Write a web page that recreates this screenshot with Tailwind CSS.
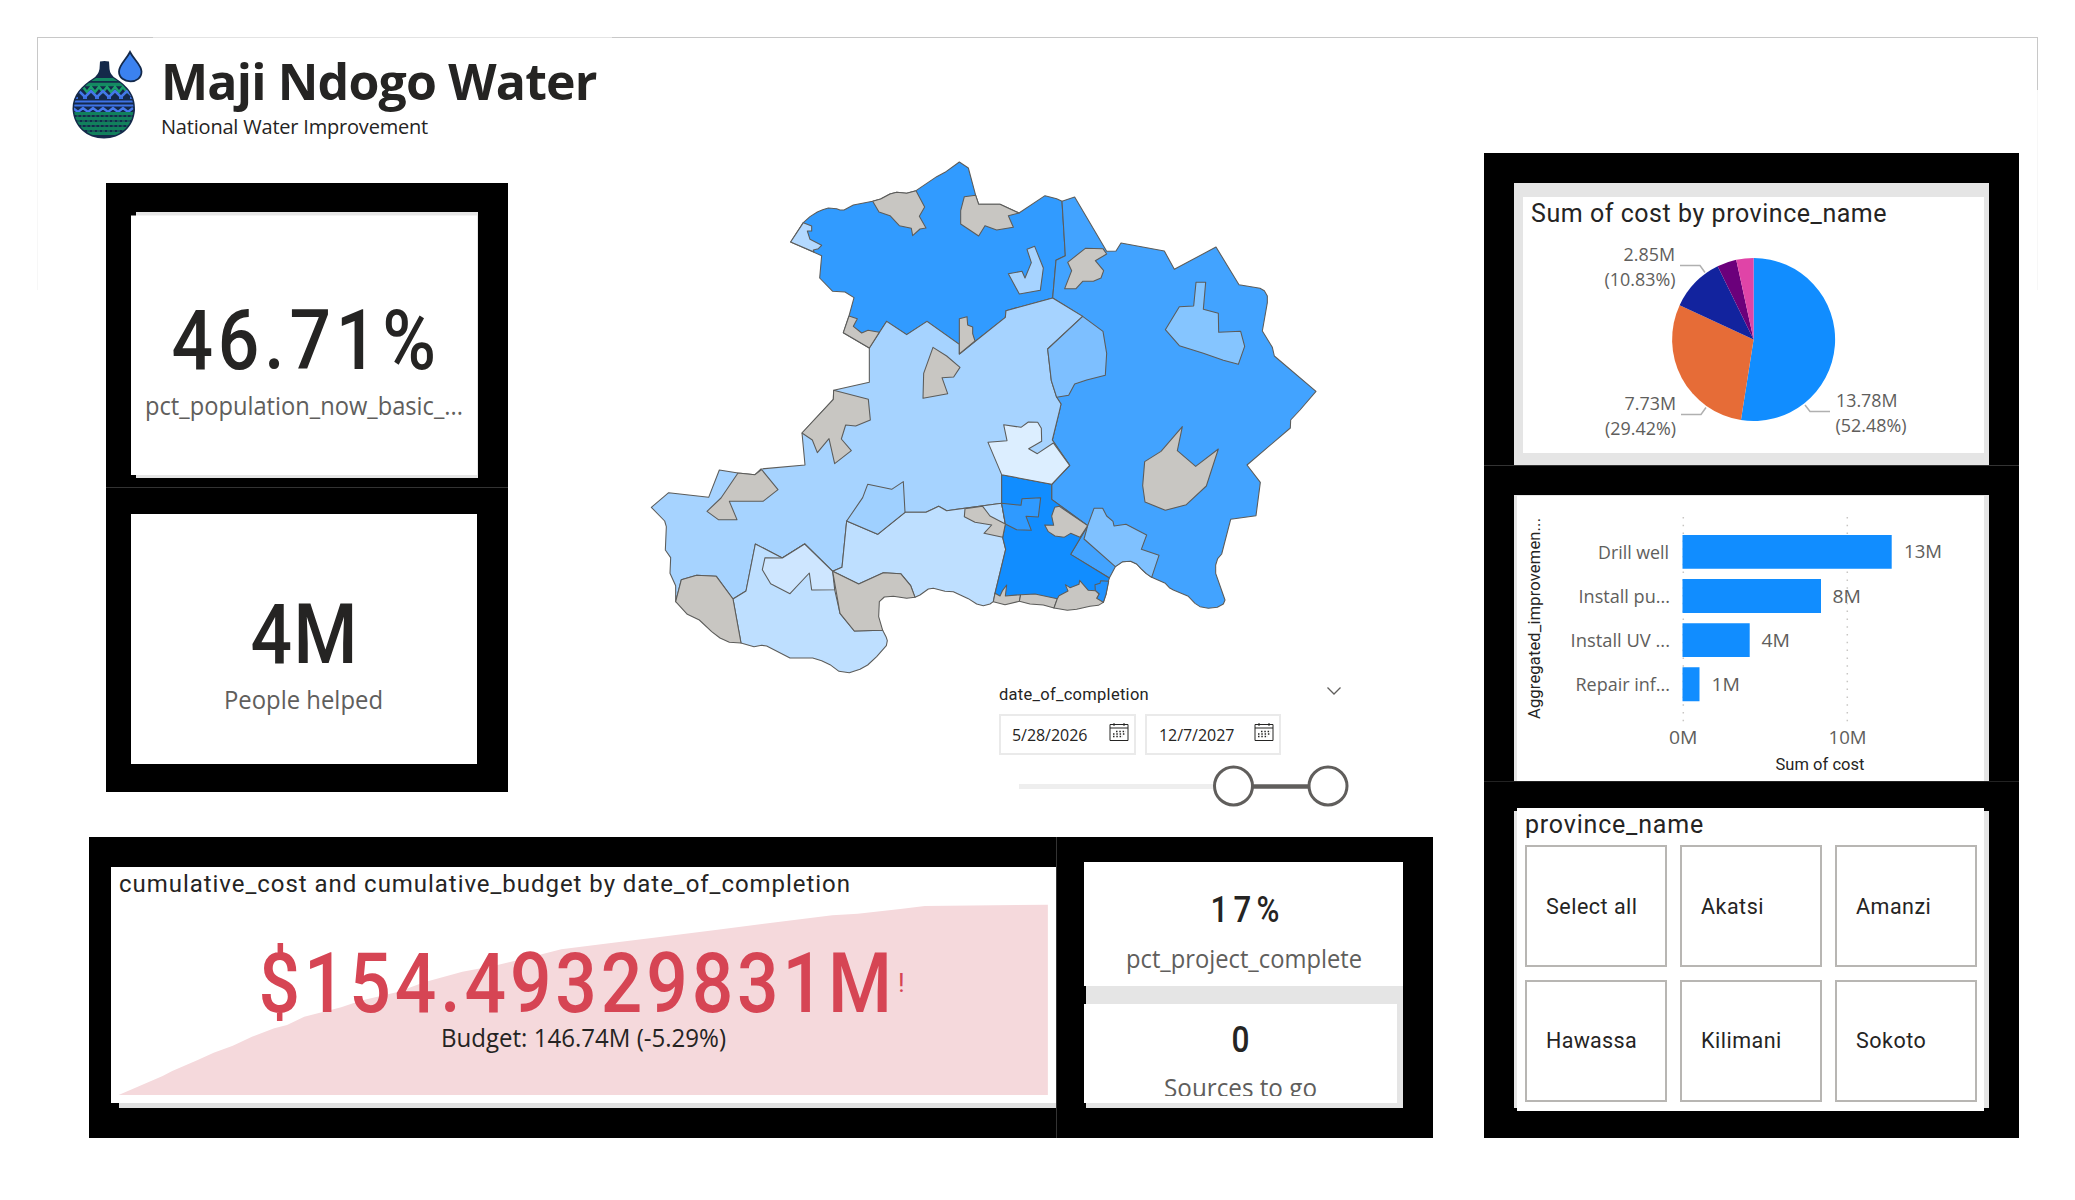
<!DOCTYPE html>
<html lang="en">
<head>
<meta charset="utf-8">
<title>Maji Ndogo Water</title>
<script src="https://cdn.jsdelivr.net/npm/@tailwindcss/browser@4"></script>
</head>
<body class="bg-white">
<div class="relative flex w-[2075px] h-[1200px] overflow-hidden font-['Open_Sans',sans-serif] text-[#252423]">
  <!-- canvas edge -->
  <div class="absolute left-[37px] top-[37px] w-[2001px] h-[53px] border border-b-0 border-[#c8c8c8]"></div>
  <div class="absolute left-[153px] top-[37px] w-[459px] h-px bg-[#e4e4e4]"></div>
  <div class="absolute left-[37px] top-[90px] w-[2001px] h-[200px] border-x border-[#f7f7f7]"></div>

  <div class="flex flex-col w-[1484px]">
    <header class="flex h-[150px] pl-[71px] pt-[49px]">
      <svg class="w-[74px] h-[92px] shrink-0" viewBox="71 49 74 92">
        <path d="M100 61.500Q104.500 60.500 109 61.500L109.500 69Q110 75 116 78.500C127 86 135.500 94 135 110C134 127 121 138.500 104 138.500C87 138.500 73.500 127 72.500 109C72.500 94 82 86 93 78.500Q98.500 75 99.500 69Z" fill="#14294a"/>
        <clipPath id="gourd"><path d="M96 78H113C126 86 133.500 95 133.500 109C133 126 120 137 104 137C88 137 74.500 126 74 109C74 95 83 86 96 78Z"/></clipPath>
        <g clip-path="url(#gourd)" fill="none">
          <path d="M72 79.500H136" stroke="#148a62" stroke-width="3"/>
          <path d="M72 84.500H136" stroke="#148a62" stroke-width="3.500"/>
          <path d="M79 90l4-3 4 5 4-5 4 5 4-5 4 5 4-5 4 5 4-5 4 5 4-5 4 5 4-5" stroke="#1aa06b" stroke-width="2.500"/>
          <path d="M73 97l6-6 6 6 6-6 6 6 6-6 6 6 6-6 6 6 6-6 6 6 6-6" stroke="#4377e8" stroke-width="2.500"/>
          <path d="M75 98h3M83 98h4M95 98h4M107 98h4M119 98h4M130 98h3" stroke="#3a6fe0" stroke-width="2"/>
          <path d="M72 101.500H136M72 105.500H136" stroke="#3e73e6" stroke-width="2.200"/>
          <path d="M73 108l5 4 5-4 5 4 5-4 5 4 5-4 5 4 5-4 5 4 5-4 5 4 5-4" stroke="#4679ec" stroke-width="2.500"/>
          <path d="M72 113.500H136M72 118.500H136M72 123.500H136M72 128.500H136M72 133.500H136" stroke="#11805c" stroke-width="3"/>
          <path d="M72 116H136M72 126H136" stroke="#1b8a68" stroke-width="1.200" stroke-dasharray="2 2.500"/>
          <path d="M72 121H136M72 131H136" stroke="#1b8a68" stroke-width="1.200" stroke-dasharray="3 2"/>
        </g>
        <path d="M130 52C134 60 141.500 65 141.500 71.500C141.500 78 136.500 81.300 130.500 81.300C124.500 81.300 119 78 119 71.500C119 65 126 60 130 52Z" fill="#3b82f0" stroke="#14294a" stroke-width="1.800"/>
      </svg>
      <div class="flex flex-col pl-[16px] pt-[7px]">
        <h1 class="text-[50px] leading-none font-bold tracking-[-0.820px] whitespace-nowrap">Maji Ndogo Water</h1>
        <p class="mt-[11px] text-[20px] leading-none tracking-[-0.200px] whitespace-nowrap">National Water Improvement</p>
      </div>
    </header>

    <div class="flex h-[687px]">
      <!-- KPI column -->
      <section class="ml-[106px] mt-[33px] w-[402px] h-[609px] shrink-0 bg-black pl-[25px] flex flex-col">
        <svg class="mt-[29px] w-[347px] h-[266px] shrink-0" viewBox="131 212 347 266">
          <path d="M136 212h342v266h-342z" fill="#e6e6e6"/>
          <path d="M131 215.500h346v259.500h-346z" fill="#fff"/>
          <text transform="translate(171.500 369) scale(.87 1)" x="0" y="0" textLength="304" font-family="Roboto" font-weight="500" font-size="84" fill="#252423">46.71%</text>
          <text x="145" y="415" textLength="318" lengthAdjust="spacingAndGlyphs" font-family="Open Sans" font-size="25" fill="#605e5c">pct_population_now_basic_...</text>
        </svg>
        <div class="mt-[9px] -ml-[25px] w-[402px] h-px shrink-0 bg-[#333]"></div>
        <svg class="mt-[26px] w-[346px] h-[250px] shrink-0 bg-white" viewBox="131 514 346 250">
          <text transform="translate(250.500 662.500) scale(.87 1)" x="0" y="0" textLength="123" font-family="Roboto" font-weight="500" font-size="84" fill="#252423">4M</text>
          <text x="224" y="709" textLength="159" lengthAdjust="spacingAndGlyphs" font-family="Open Sans" font-size="25" fill="#605e5c">People helped</text>
        </svg>
      </section>

      <section class="ml-[132px] w-[760px] flex flex-col">
        <!-- province map -->
        <svg class="w-[700px] h-[530px] shrink-0" viewBox="0 0 2100 1590" stroke="#5c5c5a" stroke-width="3.200" stroke-linejoin="round">
          <polygon fill="#319bff" points="490,218 510,200 532,186 548,179 565,174 590,176 600,180 612,180 640,165 698,154 722,147 750,132 770,127 800,130 828,122 890,80 915,67 958,36 985,54 1007,136 1016,163 1080,163 1137,189 1215,137 1250,146 1266,154 1276,317 1248,331 1238,444 1098,482 1096,502 958,612 958,583 861,514 800,554 740,514 688,594 610,548 627,498 642,443 615,426 578,424 539,384 545,317 452,276"/>
          <polygon fill="#42a3ff" points="1266,154 1304,141 1400,304 1428,303 1443,279 1573,303 1603,358 1728,291 1797,404 1860,415 1873,422 1882,438 1882,458 1867,543 1897,592 1903,618 2028,724 1980,780 1952,810 1951,834 1821,945 1861,997 1848,1097 1772,1108 1745,1212 1733,1226 1727,1245 1727,1270 1755,1350 1750,1362 1732,1372 1705,1375 1680,1370 1665,1360 1645,1339 1600,1320 1588,1313 1576,1300 1535,1282 1518,1270 1503,1256 1490,1242 1472,1234 1448,1235 1426,1250 1408,1284 1292,1213 1343,1127 1235,1048 1235,1003 1289,946 1237,870 1259,780 1263,762 1250,742 1234,692 1223,597 1328,499 1238,444 1248,331 1276,317"/>
          <polygon fill="#a6d3ff" points="688,594 740,514 800,554 861,514 958,583 958,612 1096,502 1098,482 1238,444 1328,499 1223,597 1234,692 1250,742 1263,762 1259,780 1237,870 1289,946 1235,1003 1085,974 1085,1060 920,1082 896,1069 858,1087 795,1087 713,1153 620,1113 606,1252 578,1264 494,1182 427,1224 346,1182 318,1323 279,1347 229,1279 170,1276 124,1289 107,1355 107,1307 90,1270 92,1223 76,1200 79,1130 74,1113 34,1072 86,1028 206,1042 238,960 294,969 345,974 363,957 495,945 486,849 580,748 581,721 688,697"/>
          <polygon fill="#bedfff" points="279,1347 318,1323 346,1182 427,1224 494,1182 578,1264 584,1319 600,1390 643,1443 728,1441 738,1460 742,1472 739,1487 710,1520 683,1545 660,1558 628,1568 597,1564 570,1544 545,1532 518,1524 450,1524 380,1488 365,1486 342,1490 303,1479"/>
          <polygon fill="#bedfff" points="620,1113 713,1153 795,1087 858,1087 896,1069 920,1082 1085,1060 1096,1122 1088,1162 1097,1198 1065,1330 1060,1355 1050,1362 1030,1367 1010,1362 985,1346 940,1325 915,1324 880,1315 865,1317 840,1335 825,1342 812,1307 782,1271 730,1268 656,1302 578,1264 606,1252"/>
          <polygon fill="#118dff" points="1085,974 1235,1003 1235,1048 1343,1127 1292,1213 1408,1284 1405,1294 1398,1333 1390,1357 1252,1370 1065,1340 1065,1330 1097,1198 1088,1162 1096,1122 1085,1060"/>
          <polygon fill="#b3d9ff" points="490,218 515,228 515,243 502,243 510,268 545,286 535,296 520,300 522,306 452,276"/>
          <polygon fill="#a6d3ff" points="1161,298 1184,289 1210,354 1201,421 1138,432 1105,371 1146,364 1155,384 1174,338"/>
          <polygon fill="#7dbfff" points="1328,499 1389,544 1400,610 1396,676 1340,690 1304,702 1286,736 1250,742 1234,692 1223,597"/>
          <polygon fill="#85c5ff" points="1668,397 1697,397 1690,478 1735,490 1736,547 1802,544 1814,589 1795,643 1750,631 1690,610 1618,587 1576,539 1618,470 1661,468"/>
          <polygon fill="#7fc1ff" points="1362,1075 1388,1075 1400,1098 1419,1114 1422,1128 1458,1123 1520,1155 1504,1198 1557,1216 1535,1282 1518,1270 1503,1256 1490,1242 1472,1234 1448,1235 1426,1250 1332,1167 1343,1127"/>
          <polygon fill="#9fd0ff" points="683,1003 755,1018 790,995 795,1087 713,1153 620,1113 668,1043"/>
          <polygon fill="#dceeff" points="1044,877 1101,872 1091,824 1143,832 1165,816 1193,817 1204,835 1205,874 1166,896 1192,911 1240,879 1289,946 1235,1003 1085,974"/>
          <polygon fill="#cee6ff" points="375,1223 427,1224 494,1182 578,1264 584,1319 515,1320 508,1269 450,1331 392,1301 367,1259"/>
          <polygon fill="#2f9aff" points="1085,1060 1143,1066 1146,1046 1202,1043 1195,1101 1158,1099 1174,1141 1130,1139 1096,1122"/>
          <polygon fill="#2092ff" points="1366,1322 1365,1304 1380,1300 1382,1292 1406,1294 1398,1333 1390,1357 1370,1345 1377,1332"/>
          <g fill="#c8c6c2">
            <polygon points="698,154 717,186 750,197 778,227 814,235 818,257 840,237 858,234 838,199 854,171 828,122 800,130 770,127 750,132 722,147"/>
            <polygon points="973,140 1007,136 1016,163 1080,163 1137,189 1105,197 1120,232 1070,240 1035,227 1016,258 962,222 962,182"/>
            <polygon points="627,498 652,506 640,529 665,549 684,541 718,547 688,594 610,548"/>
            <polygon points="958,506 981,500 983,525 998,531 998,551 1005,573 958,612"/>
            <polygon points="1336,295 1389,296 1400,312 1366,332 1391,362 1383,384 1360,394 1328,394 1308,416 1274,416 1295,362 1283,337"/>
            <polygon points="1627,830 1612,902 1667,949 1735,897 1699,1008 1639,1064 1576,1081 1515,1056 1508,1007 1514,935 1563,904"/>
            <polygon points="581,721 685,748 691,810 647,828 617,825 604,867 634,902 584,941 567,866 532,908 517,870 486,849 580,748"/>
            <polygon points="879,592 920,618 960,652 941,681 906,683 923,731 849,745 851,670"/>
            <polygon points="294,969 345,974 365,959 414,1019 369,1054 268,1054 291,1109 235,1109 201,1084 243,1044"/>
            <polygon points="107,1355 124,1289 170,1276 229,1279 279,1347 303,1479 268,1477 240,1464 215,1445 178,1410 142,1393"/>
            <polygon points="578,1264 656,1302 730,1268 782,1271 812,1307 825,1342 800,1345 760,1339 733,1341 718,1355 716,1400 728,1441 643,1443 600,1390"/>
            <polygon points="975,1076 1028,1069 1050,1098 1096,1122 1088,1162 1032,1150 1055,1125 1005,1117 973,1100"/>
            <polygon points="1258,1069 1343,1127 1320,1162 1292,1150 1272,1162 1245,1158 1225,1145 1214,1125 1241,1126 1235,1098 1244,1072"/>
            <polygon points="1065,1330 1080,1338 1088,1321 1100,1305 1096,1338 1142,1334 1138,1354 1095,1364 1060,1355"/>
            <polygon points="1142,1334 1185,1332 1252,1346 1242,1374 1210,1365 1170,1362 1138,1354"/>
            <polygon points="1252,1346 1257,1337 1284,1323 1276,1304 1290,1313 1317,1303 1319,1291 1345,1321 1366,1322 1377,1332 1370,1345 1390,1357 1375,1366 1350,1369 1310,1378 1282,1381 1242,1374"/>
          </g>
        </svg>
        <!-- date slicer -->
        <div class="ml-[359px] w-[352px]">
          <div class="flex items-start justify-between pt-[7px] pr-[9px]">
            <h2 class="text-[16.500px] leading-none font-['Roboto'] tracking-[0.280px]">date_of_completion</h2>
            <svg class="w-[16px] h-[10px] -mt-px" viewBox="0 0 16 10" fill="none" stroke="#605e5c" stroke-width="1.300"><path d="M1.500 1.500L8 8l6.500-6.500"/></svg>
          </div>
          <div class="flex gap-[9px] mt-[10px]">
            <div class="flex items-center justify-between w-[137px] h-[41px] border-2 border-[#eaeaea] pl-[11px] pr-[5px] text-[16px] tracking-[-0.050px]"><span class="mt-[2px]">5/28/2026</span>
              <svg class="w-[20px] h-[20px] -mt-[4px]" viewBox="0 0 20 20" fill="none" stroke="#252423"><path d="M1 2.500h18v16H1zM1 6h18M5 1v3M15 1v3"/><path d="M7 9.500h10M4 12h13M4 14.500h10" stroke-width="1.500" stroke-dasharray="1.500 1.800"/></svg></div>
            <div class="flex items-center justify-between w-[136px] h-[41px] border-2 border-[#eaeaea] pl-[12px] pr-[5px] text-[16px] tracking-[-0.050px]"><span class="mt-[2px]">12/7/2027</span>
              <svg class="w-[20px] h-[20px] -mt-[4px]" viewBox="0 0 20 20" fill="none" stroke="#252423"><path d="M1 2.500h18v16H1zM1 6h18M5 1v3M15 1v3"/><path d="M7 9.500h10M4 12h13M4 14.500h10" stroke-width="1.500" stroke-dasharray="1.500 1.800"/></svg></div>
          </div>
          <svg class="w-[352px] h-[50px] mt-[5px]" viewBox="999 760 352 50">
            <path d="M1019 786.500h200" stroke="#eee" stroke-width="5"/>
            <path d="M1250 786.500h60" stroke="#605e5c" stroke-width="4.500"/>
            <circle cx="1233.500" cy="786" r="19" fill="#fff" stroke="#605e5c" stroke-width="3"/>
            <circle cx="1328" cy="786" r="19" fill="#fff" stroke="#605e5c" stroke-width="3"/>
          </svg>
        </div>
      </section>
    </div>

    <!-- bottom band -->
    <section class="flex ml-[89px] w-[1344px] h-[301px] bg-black">
      <div class="w-[967px] pl-[22px] pt-[30px] shrink-0">
        <div class="w-[945px] h-[236px] bg-white pt-[5px]">
          <h2 class="pl-[8px] text-[24px] leading-none font-['Roboto'] tracking-[0.960px] whitespace-nowrap h-[24px]">cumulative_cost and cumulative_budget by date_of_completion</h2>
          <div class="relative h-[207px]">
            <svg class="w-[945px] h-[199px]" viewBox="49 228 1481.760 597" preserveAspectRatio="none">
              <polygon fill="#f5d9dc" points="61,825 130,768 145,753 185,720 210,698 240,677 270,650 305,625 325,615 352,590 410,562 440,542 500,515 540,487 600,455 650,437 720,405 755,388 830,370 900,353 1000,329 1180,286 1220,281 1290,266 1325,258 1518,254 1518,825"/>
            </svg>
            <svg class="absolute left-0 top-0 w-[945px] h-[199px]" viewBox="111 896 945 199">
              <text transform="translate(258.500 1012) scale(.87 1)" x="0" y="0" textLength="728" font-family="Roboto" font-weight="500" font-size="84" fill="#d64554">$154.49329831M</text>
              <text x="898" y="992" font-family="Roboto" font-size="26" fill="#d64554">!</text>
              <text x="441" y="1047" textLength="285" lengthAdjust="spacingAndGlyphs" font-family="Open Sans" font-size="25" fill="#252423">Budget: 146.74M (-5.29%)</text>
            </svg>
          </div>
        </div>
        <div class="ml-[8px] w-[937px] h-[5px] bg-[#e0e0e0]"></div>
      </div>
      <div class="w-px bg-[#333] shrink-0"></div>
      <div class="w-[376px] pl-[27px] pt-[25px]">
        <div class="w-[319px] h-[124px] bg-white">
          <svg class="w-[319px] h-[124px]" viewBox="1084 862 319 124">
            <text transform="translate(1210.500 922) scale(.83 1)" x="0" y="0" textLength="83" font-family="Roboto" font-weight="500" font-size="37.500" fill="#252423">17%</text>
            <text x="1126" y="968" textLength="236" lengthAdjust="spacingAndGlyphs" font-family="Open Sans" font-size="25" fill="#605e5c">pct_project_complete</text>
          </svg>
        </div>
        <div class="ml-[2px] w-[317px] h-[122px] pt-[18px] bg-[#e5e5e5]">
          <div class="-ml-[2px] w-[313px] h-[99px] bg-white">
            <svg class="w-[313px] h-[92px]" viewBox="1084 1004 313 92">
              <text x="1240.500" y="1052" text-anchor="middle" textLength="18" lengthAdjust="spacingAndGlyphs" font-family="Roboto" font-weight="500" font-size="37" fill="#252423">0</text>
              <text x="1164" y="1097" textLength="153" lengthAdjust="spacingAndGlyphs" font-family="Open Sans" font-size="25" fill="#605e5c">Sources to go</text>
            </svg>
          </div>
        </div>
      </div>
    </section>
  </div>

  <!-- right panel -->
  <section class="mt-[153px] w-[535px] h-[985px] bg-black flex flex-col">
    <div class="mt-[30px] ml-[30px] w-[475px] h-[282px] bg-[#e5e5e5] pl-[9px] pt-[14px]">
      <div class="w-[461px] h-[256px] bg-white pt-[4px]">
        <h2 class="pl-[8px] h-[24px] text-[25px] leading-none font-['Roboto'] tracking-[0.540px] whitespace-nowrap">Sum of cost by province_name</h2>
        <svg class="w-[461px] h-[228px]" viewBox="1523 225 461 228">
          <g id="slices" transform="translate(1753.600 339.500)"></g>
          <g fill="none" stroke="#b0b0b0" stroke-width="1.500"><path d="M1680 265.500h20l5 7M1681 414.500h20l5-7M1805 405l5 6.500h20"/></g>
          <g font-family="Open Sans" font-size="17.500" fill="#605e5c">
            <text x="1623.500" y="260.500" textLength="51.500" lengthAdjust="spacingAndGlyphs">2.85M</text>
            <text x="1604.500" y="285.500" textLength="71" lengthAdjust="spacingAndGlyphs">(10.83%)</text>
            <text x="1624.500" y="410" textLength="51.500" lengthAdjust="spacingAndGlyphs">7.73M</text>
            <text x="1605" y="434.500" textLength="71" lengthAdjust="spacingAndGlyphs">(29.42%)</text>
            <text x="1836" y="407" textLength="61.500" lengthAdjust="spacingAndGlyphs">13.78M</text>
            <text x="1835.500" y="431.500" textLength="71" lengthAdjust="spacingAndGlyphs">(52.48%)</text>
          </g>
        </svg>
      </div>
    </div>
    <div class="h-px bg-[#333]"></div>
    <div class="mt-[29px] ml-[30px] w-[475px] h-[286px] bg-[#e5e5e5] pl-[3px] pt-px">
      <svg class="w-[467px] h-[285px] bg-white" viewBox="1517 496 467 285">
        <path d="M1683.300 517v205M1847.300 517v205" stroke="#c8c6c4" stroke-width="1.500" stroke-dasharray="1.500 6.300"/>
        <path fill="#118dff" d="M1682.500 535h209.200v33.700h-209.200zM1682.500 579h138.500v34h-138.500zM1682.500 623.300h67.200v33.700h-67.200zM1682.500 667.300h17v34h-17z"/>
        <text transform="translate(1540 719) rotate(-90)" textLength="201" font-family="Roboto" font-size="16.500" fill="#252423">Aggregated_improvemen...</text>
        <g font-family="Open Sans" font-size="17.500" fill="#605e5c">
          <text x="1598" y="559" textLength="71" lengthAdjust="spacingAndGlyphs">Drill well</text>
          <text x="1578.500" y="603" textLength="91.500" lengthAdjust="spacingAndGlyphs">Install pu...</text>
          <text x="1570.500" y="647" textLength="99.500" lengthAdjust="spacingAndGlyphs">Install UV ...</text>
          <text x="1575.500" y="691" textLength="94.500" lengthAdjust="spacingAndGlyphs">Repair inf...</text>
          <text x="1904" y="558" textLength="38" lengthAdjust="spacingAndGlyphs">13M</text>
          <text x="1832.500" y="603" textLength="28.500" lengthAdjust="spacingAndGlyphs">8M</text>
          <text x="1761.500" y="647" textLength="28.500" lengthAdjust="spacingAndGlyphs">4M</text>
          <text x="1711.500" y="691" textLength="28.500" lengthAdjust="spacingAndGlyphs">1M</text>
          <text x="1669" y="744" textLength="28.500" lengthAdjust="spacingAndGlyphs">0M</text>
          <text x="1828.500" y="744" textLength="38" lengthAdjust="spacingAndGlyphs">10M</text>
        </g>
        <text x="1775.500" y="770" textLength="89" font-family="Roboto" font-size="16.500" fill="#252423">Sum of cost</text>
      </svg>
    </div>
    <div class="h-px bg-[#222]"></div>
    <div class="relative mt-[26px] ml-[33px] w-[467px] h-[303px] bg-white">
      <div class="absolute -left-[3px] top-[3px] w-[3px] h-[297px] bg-[#e5e5e5]"></div>
      <div class="absolute -right-[5px] top-[3px] w-[5px] h-[297px] bg-[#e5e5e5]"></div>
      <h2 class="pl-[8px] pt-[4px] h-[37px] text-[25px] leading-none font-['Roboto'] tracking-[0.800px]">province_name</h2>
      <div class="grid grid-cols-3 gap-x-[13px] gap-y-[13px] pl-[8px] w-[460px] text-[21.500px] leading-none font-['Roboto'] tracking-[0.500px] whitespace-nowrap">
        <div class="flex items-center h-[122px] border-2 border-[#b8b6b3] pl-[19px] pt-px">Select all</div>
        <div class="flex items-center h-[122px] border-2 border-[#b8b6b3] pl-[19px] pt-px">Akatsi</div>
        <div class="flex items-center h-[122px] border-2 border-[#b8b6b3] pl-[19px] pt-px">Amanzi</div>
        <div class="flex items-center h-[122px] border-2 border-[#b8b6b3] pl-[19px] tracking-[0.300px]">Hawassa</div>
        <div class="flex items-center h-[122px] border-2 border-[#b8b6b3] pl-[19px]">Kilimani</div>
        <div class="flex items-center h-[122px] border-2 border-[#b8b6b3] pl-[19px]">Sokoto</div>
      </div>
    </div>
  </section>
</div>
<script>
  // pie slices, clockwise from twelve o'clock
  const slices = [[52.48, '#118dff'], [29.42, '#e66c37'], [10.83, '#12239e'], [3.85, '#6b007b'], [3.42, '#e044a7']];
  const r = 81.5;
  let acc = 0;
  const at = v => { const a = v / 100 * 2 * Math.PI; return (r * Math.sin(a)).toFixed(2) + ' ' + (-r * Math.cos(a)).toFixed(2); };
  document.getElementById('slices').innerHTML = slices.map(([v, c]) => {
    const d = `M0 0L${at(acc)}A${r} ${r} 0 ${v > 50 ? 1 : 0} 1 ${at(acc += v)}Z`;
    return `<path d="${d}" fill="${c}"/>`;
  }).join('');
</script>
</body>
</html>
